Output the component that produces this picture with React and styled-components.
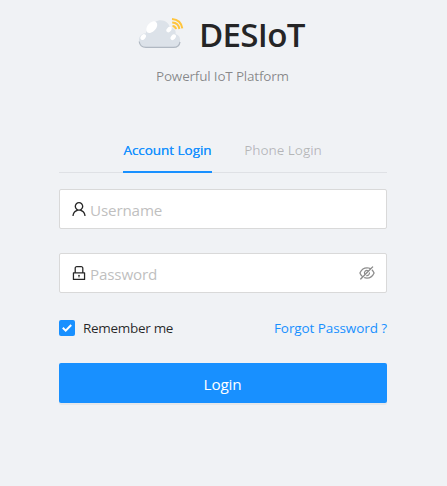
import React from "react";
import styled, { createGlobalStyle } from "styled-components";
import { AiOutlineUser, AiOutlineLock, AiOutlineEyeInvisible } from "react-icons/ai";

const GlobalStyle = createGlobalStyle`
  *, *::before, *::after { box-sizing: border-box; }
  body {
    margin: 0;
    background: #f0f2f5;
    font-family: "Open Sans", "Noto Sans", sans-serif;
    font-size: 13.5px;
    line-height: 22px;
    letter-spacing: -0.19px;
    color: rgba(0, 0, 0, 0.85);
  }
  button, input { font: inherit; letter-spacing: inherit; }
`;

const Page = styled.main`
  min-height: 486px;
  padding-top: 13px;
  background: #f0f2f5;
`;

const Container = styled.div`
  width: 328px;
  margin-left: 59px;
`;

const Brand = styled.header`
  display: flex;
  height: 44px;
  padding-left: 79px;
`;

const LogoSvg = styled.svg`
  flex: none;
  width: 48px;
  height: 44px;
`;

const Title = styled.h1`
  margin: 0 0 0 13px;
  font-size: 33.2px;
  font-weight: 600;
  line-height: 44px;
  letter-spacing: -0.75px;
  white-space: nowrap;
`;

const Subtitle = styled.p`
  margin: 8px 0 0;
  padding-left: 97px;
  color: rgba(0, 0, 0, 0.45);
  white-space: nowrap;
`;

const Tabs = styled.nav`
  display: flex;
  gap: 32px;
  height: 46px;
  margin-top: 40px;
  padding-left: 64px;
  border-bottom: 1px solid #dfe1e5;
`;

const Tab = styled.button`
  width: ${(p) => p.$width}px;
  height: 46px;
  padding: 2px 0 0;
  border: 0;
  border-bottom: 2px solid ${(p) => (p.$active ? "#1890ff" : "transparent")};
  background: none;
  color: ${(p) => (p.$active ? "#1890ff" : "rgba(0, 0, 0, 0.25)")};
  letter-spacing: -0.04px;
  text-shadow: ${(p) => (p.$active ? "0 0 0.25px currentColor" : "none")};
  white-space: nowrap;
`;

const Field = styled.label`
  display: flex;
  align-items: center;
  height: 40px;
  margin-top: ${(p) => p.$gap}px;
  padding: 0 10px;
  border: 1px solid #d9d9d9;
  border-radius: 2px;
  background: #fff;

  svg { flex: none; }
`;

const FieldInput = styled.input`
  flex: 1;
  min-width: 0;
  height: 24px;
  margin: 1px 4px 0 2px;
  padding: 0;
  border: 0;
  outline: 0;
  background: transparent;
  font-size: 15.2px;
  letter-spacing: -0.15px;

  &::placeholder { color: #bfbfbf; opacity: 1; }
`;

const Options = styled.div`
  display: flex;
  align-items: center;
  justify-content: space-between;
  height: 22px;
  margin-top: 24px;
`;

const Remember = styled.span`
  display: flex;
  align-items: center;
  gap: 8px;
  letter-spacing: -0.3px;
  white-space: nowrap;
`;

const CheckBox = styled.span`
  display: grid;
  place-items: center;
  width: 16px;
  height: 16px;
  border-radius: 2px;
  background: #1890ff;
`;

const ForgotLink = styled.a`
  color: #1890ff;
  letter-spacing: -0.09px;
  white-space: nowrap;
`;

const LoginButton = styled.button`
  display: block;
  width: 100%;
  height: 40px;
  margin-top: 24px;
  padding: 2px 1px 0 0;
  border: 0;
  border-radius: 2px;
  background: #1890ff;
  box-shadow: 0 2px 0 rgba(0, 0, 0, 0.043);
  color: #fff;
  font-size: 15.3px;
`;

function CloudLogo() {
  return (
    <LogoSvg viewBox="0 0 48 44" aria-hidden="true">
      <path d="M8 34.200C4 34.200 1 31.500 1 27c0-3.800 2.700-6.500 7-6.700C7.800 14 11.500 9.800 17 9 23.500 4.800 31.500 9 32 15.200c3.800-.6 6.200 2.200 5.600 5.800 3 1 4.500 3.200 4.500 6 0 4.200-3 7.200-6.700 7.200Z" fill="#dce2e9" />
      <path d="M1.200 28.500c.5 3.800 3.200 5.800 6.800 5.800h27.500c3.500 0 6-2 6.500-5.500" fill="none" stroke="#b0b8c2" strokeWidth="1.200" />
      <g fill="#fff">
        <ellipse cx="13.700" cy="14.200" rx="6.800" ry="4.300" transform="rotate(-48 13.700 14.200)" />
        <ellipse cx="5.200" cy="24" rx="3.200" ry="2.300" transform="rotate(-50 5.200 24)" />
        <ellipse cx="31" cy="16.600" rx="3" ry="2.200" transform="rotate(-48 31 16.600)" />
        <ellipse cx="35.200" cy="24.200" rx="3.200" ry="2.200" transform="rotate(-48 35.200 24.200)" />
      </g>
      <g fill="none" stroke="#ffc53d" strokeWidth="2">
        <path d="M34.500 13q3 .2 3.500 3.200" />
        <path d="M34.200 9.400q6.300.3 7.200 6.600" />
        <path d="M34 5.900Q43 6.500 44.300 15.400" />
      </g>
    </LogoSvg>
  );
}

export default function App() {
  return (
    <>
      <GlobalStyle />
      <Page>
        <Container>
          <Brand>
            <CloudLogo />
            <Title>DESIoT</Title>
          </Brand>
          <Subtitle>Powerful IoT Platform</Subtitle>
          <Tabs>
            <Tab $active $width={89}>Account Login</Tab>
            <Tab $width={78}>Phone Login</Tab>
          </Tabs>
          <Field $gap={16}>
            <AiOutlineUser size={18} color="#262626" />
            <FieldInput placeholder="Username" aria-label="Username" />
          </Field>
          <Field $gap={24}>
            <AiOutlineLock size={18} color="#262626" />
            <FieldInput type="password" placeholder="Password" aria-label="Password" />
            <AiOutlineEyeInvisible size={18} color="#8c8c8c" />
          </Field>
          <Options>
            <Remember>
              <CheckBox>
                <svg width="10" height="8" viewBox="0 0 10 8" fill="none" stroke="#fff" strokeWidth="2">
                  <path d="M.8 3.8 3.7 6.6 9.2 1" />
                </svg>
              </CheckBox>
              Remember me
            </Remember>
            <ForgotLink>Forgot Password ?</ForgotLink>
          </Options>
          <LoginButton>Login</LoginButton>
        </Container>
      </Page>
    </>
  );
}
